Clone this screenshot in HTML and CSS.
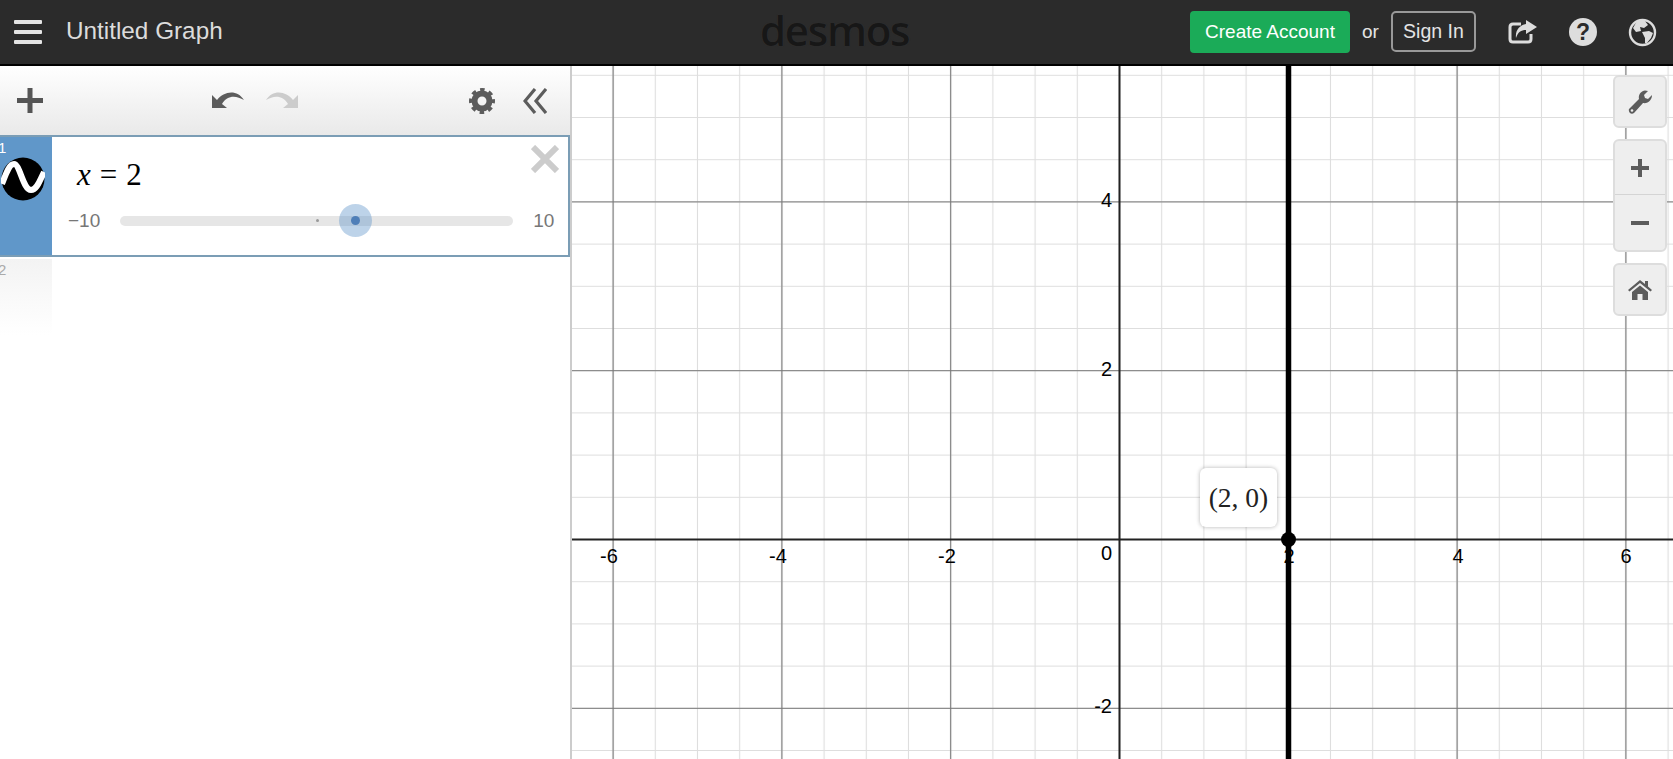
FILE: index.html
```html
<!DOCTYPE html>
<html lang="en">
<head>
    <meta charset="UTF-8">
    <title>Desmos | Graphing Calculator</title>
    <link rel="stylesheet" href="styles.css">
</head>
<body>
    <div class="header">
        <div class="header-left">
            <div class="hamburger"><span></span><span></span><span></span></div>
            <span class="graph-title">Untitled Graph</span>
        </div>
        <div class="logo">desmos</div>
        <div class="header-right">
            <a class="btn-create">Create Account</a>
            <span class="or">or</span>
            <a class="btn-signin">Sign In</a>
            <svg class="share-icon" width="29" height="24" viewBox="0 0 29 24">
                <path d="M13 4H5Q2 4 2 7V19Q2 22 5 22H20Q23 22 23 19V14" fill="none" stroke="#ddd" stroke-width="3"/>
                <path d="M18 0L29 7L18 14V10C13 10 10 12 8 18C7 10 12 5 18 4Z" fill="#ddd"/>
            </svg>
            <span class="help-icon">?</span>
            <svg class="globe-icon" width="29" height="29" viewBox="0 0 29 29">
                <circle cx="14.5" cy="14.5" r="12.5" fill="none" stroke="#ddd" stroke-width="2.400"/>
                <path d="M9 3L17 3L20 7L16 10L12 9L13 13L8 14L5 10Z" fill="#ddd"/>
                <path d="M14 14L21 13L25 15L23 20L19 25L17 25L17 20Z" fill="#ddd"/>
            </svg>
        </div>
    </div>

    <div class="main">
        <div class="sidebar">
            <div class="toolbar">
                <svg width="26" height="25" viewBox="0 0 26 25"><path d="M10.5 0h5v10h10.5v5H15.500v10h-5V15H0v-5h10.500z" fill="#555"/></svg>
                <div class="undo-redo">
                    <svg width="32" height="18" viewBox="0 0 32 18"><path d="M0 5L5 10C12 1 25-1 32 10C24 5 15 5 10 14L15 18H0Z" fill="#5c5c5c"/></svg>
                    <svg class="redo" width="32" height="18" viewBox="0 0 32 18"><path d="M0 5L5 10C12 1 25-1 32 10C24 5 15 5 10 14L15 18H0Z" fill="#ccc"/></svg>
                </div>
                <div class="toolbar-right">
                    <svg width="26" height="26" viewBox="0 0 26 26">
                        <circle cx="13" cy="13" r="7.500" fill="none" stroke="#5c5c5c" stroke-width="6"/>
                        <circle cx="13" cy="13" r="11" fill="none" stroke="#5c5c5c" stroke-width="4" stroke-dasharray="4.400 4.240" stroke-dashoffset="2.200"/>
                    </svg>
                    <svg width="24" height="26" viewBox="0 0 24 26"><path d="M12 1L2 13L12 25M23 1L13 13L23 25" fill="none" stroke="#5c5c5c" stroke-width="3.200"/></svg>
                </div>
            </div>

            <div class="expression active">
                <div class="expr-tab">
                    <span class="expr-num">1</span>
                    <svg class="expr-icon" width="44" height="44" viewBox="0 0 44 44">
                        <circle cx="22" cy="22" r="21.500" fill="#000"/>
                        <path d="M1 27C5 17 8 7 13 7C19 7 22 33 30 33C36 33 39 23 43 15" fill="none" stroke="#fff" stroke-width="6"/>
                    </svg>
                </div>
                <div class="expr-body">
                    <div class="math"><i>x</i><span class="eq">=</span>2</div>
                    <div class="slider-row">
                        <span class="slider-min">−10</span>
                        <div class="slider-track">
                            <span class="slider-zero"></span>
                            <span class="slider-handle"></span>
                        </div>
                        <span class="slider-max">10</span>
                    </div>
                </div>
                <svg class="expr-close" width="28" height="28" viewBox="0 0 28 28"><path d="M2 2L26 26M26 2L2 26" stroke="#ccc" stroke-width="6"/></svg>
            </div>

            <div class="expression empty">
                <div class="expr-tab"><span class="expr-num">2</span></div>
            </div>
        </div>

        <div class="graph">
            <svg class="graph-paper" width="1101" height="693">
                <defs>
                    <pattern id="minorGrid" patternUnits="userSpaceOnUse" x="526.400" y="452.400" width="42.200" height="42.200">
                        <path d="M21.100 0V42.200M0 21.100H42.200" stroke="#dedede" stroke-width="1.100"/>
                    </pattern>
                    <pattern id="majorGrid" patternUnits="userSpaceOnUse" x="463.100" y="389.100" width="168.800" height="168.800">
                        <path d="M84.400 0V168.800M0 84.400H168.800" stroke="#777" stroke-width="1.100"/>
                    </pattern>
                </defs>
                <rect width="1101" height="693" fill="url(#minorGrid)"/>
                <rect width="1101" height="693" fill="url(#majorGrid)"/>
                <path class="axis" d="M547.500 0V693M0 473.500H1101"/>
                <path class="curve" d="M716.500 0V693"/>
                <circle cx="716.500" cy="473.500" r="7.500" fill="#000"/>
                <g class="ticks-x">
                    <text x="37" y="497">-6</text>
                    <text x="206" y="497">-4</text>
                    <text x="375" y="497">-2</text>
                    <text x="717" y="497">2</text>
                    <text x="886" y="497">4</text>
                    <text x="1054" y="497">6</text>
                </g>
                <g class="ticks-y">
                    <text x="540" y="141">4</text>
                    <text x="540" y="310">2</text>
                    <text x="540" y="494">0</text>
                    <text x="540" y="647">-2</text>
                </g>
            </svg>

            <div class="point-label">(2, 0)</div>

            <div class="graph-controls">
                <div class="ctrl-box">
                    <div class="ctrl-btn">
                        <svg width="24" height="24" viewBox="0 0 24 24">
                            <path d="M1 19L11 9C10 5 13 1 17 0.500L20 1L16 5L17 8L20 9L24 5C24 10 20 14 15 13L6 23C3 25 0 22 1 19Z" fill="#5c5c5c"/>
                            <circle cx="4" cy="20.500" r="1.300" fill="#eee"/>
                        </svg>
                    </div>
                </div>
                <div class="ctrl-box">
                    <div class="ctrl-btn">
                        <svg width="18" height="18" viewBox="0 0 18 18"><path d="M7 0h4v7h7v4h-7v7H7v-7H0V7h7z" fill="#5c5c5c"/></svg>
                    </div>
                    <div class="ctrl-btn divided">
                        <svg width="18" height="4" viewBox="0 0 18 4"><path d="M0 0h18v4H0z" fill="#5c5c5c"/></svg>
                    </div>
                </div>
                <div class="ctrl-box">
                    <div class="ctrl-btn">
                        <svg width="24" height="20" viewBox="0 0 24 20">
                            <path d="M0 10L12 0L17 4V1H20V6.500L24 10L22.500 11.500L12 3L1.500 11.500Z" fill="#5c5c5c"/>
                            <path d="M4 12L12 5.500L20 12V20H14.500V14H9.500V20H4Z" fill="#5c5c5c"/>
                        </svg>
                    </div>
                </div>
            </div>
        </div>
    </div>
</body>
</html>
```

FILE: styles.css
```css
html, body {
    height: 100%;
}
body {
    margin: 0;
    padding: 0;
    overflow: hidden;
    background-color: #fff;
    font-family: "Liberation Sans", Arial, sans-serif;
}
.header {
    display: flex;
    justify-content: space-between;
    align-items: center;
    height: 64px;
    background-color: #2b2b2b;
    border-bottom: 2px solid #000;
    color: #e4e4e4;
}
.header-left {
    display: flex;
    align-items: center;
    width: 760px;
    padding-left: 14px;
    box-sizing: border-box;
}
.hamburger {
    display: flex;
    flex-direction: column;
    gap: 6px;
    width: 28px;
    margin-right: 24px;
}
.hamburger span {
    display: block;
    height: 4px;
    background-color: #e4e4e4;
    border-radius: 1px;
}
.graph-title {
    margin-top: -2px;
    font-size: 24.3px;
    color: #dcdcdc;
}
.logo {
    width: 150px;
    margin-top: -6px;
    font-family: "Open Sans", sans-serif;
    font-size: 42px;
    font-weight: 600;
    letter-spacing: -1.300px;
    color: #171717;
    text-shadow: 0 0 1px #3a3a3a;
}
.header-right {
    display: flex;
    align-items: center;
    flex: 1;
    padding-left: 280px;
}
.btn-create {
    display: flex;
    justify-content: center;
    align-items: center;
    width: 160px;
    height: 42px;
    background-color: #1bab58;
    border-radius: 4px;
    color: #fff;
    font-size: 19px;
}
.or {
    margin: 0 12px;
    font-size: 19px;
}
.btn-signin {
    display: flex;
    justify-content: center;
    align-items: center;
    width: 85px;
    height: 41px;
    box-sizing: border-box;
    margin-top: -2px;
    padding-top: 1px;
    border: 2px solid #999;
    border-radius: 5px;
    font-size: 19.5px;
}
.share-icon {
    margin-left: 32px;
}
.help-icon {
    display: flex;
    justify-content: center;
    align-items: center;
    width: 28px;
    height: 28px;
    margin-left: 32px;
    background-color: #ddd;
    border-radius: 50%;
    color: #2b2b2b;
    font-size: 23px;
    font-weight: bold;
}
.globe-icon {
    margin-left: 31px;
}
.main {
    display: flex;
    height: calc(100% - 66px);
}
.sidebar {
    width: 570px;
    flex-shrink: 0;
    border-right: 2px solid #ccc;
    background-color: #fff;
}
.toolbar {
    display: flex;
    align-items: center;
    height: 69px;
    padding: 0 23px 0 17px;
    box-sizing: border-box;
    background: linear-gradient(#fff, #e9e9e9);
}
.undo-redo {
    display: flex;
    gap: 22px;
    margin-top: -4px;
    margin-left: 169px;
}
.redo {
    transform: scaleX(-1);
}
.toolbar-right {
    display: flex;
    align-items: center;
    gap: 28px;
    margin-left: auto;
}
.expression {
    display: flex;
    position: relative;
}
.expression.active {
    height: 122px;
    box-sizing: border-box;
    border: 2px solid #7b9db5;
    border-left: none;
}
.expr-tab {
    position: relative;
    width: 52px;
    flex-shrink: 0;
}
.active .expr-tab {
    background-color: #6097c9;
}
.expr-num {
    position: absolute;
    top: 2px;
    left: -2px;
    font-size: 15px;
    color: #fff;
}
.expr-icon {
    position: absolute;
    top: 20px;
    left: 1px;
}
.expr-body {
    flex: 1;
    padding: 20px 14px 0 25px;
}
.math {
    height: 40px;
    font-family: "Liberation Serif", "Times New Roman", serif;
    font-size: 31px;
    line-height: 36px;
    color: #000;
}
.math .eq {
    margin: 0 9px;
}
.slider-row {
    display: flex;
    align-items: center;
    margin-top: 13px;
    margin-left: -9px;
    font-size: 19px;
    color: #777;
}
.slider-track {
    position: relative;
    width: 393px;
    height: 10px;
    margin: 0 20px 0 20px;
    background-color: #e6e6e6;
    border-radius: 5px;
}
.slider-zero {
    position: absolute;
    top: 3px;
    left: 196px;
    width: 3px;
    height: 3px;
    background-color: #999;
    border-radius: 50%;
}
.slider-handle {
    position: absolute;
    top: -12px;
    left: 219px;
    width: 33px;
    height: 33px;
    background-color: rgba(90, 145, 200, 0.4);
    border-radius: 50%;
}
.slider-handle::after {
    content: "";
    position: absolute;
    top: 12px;
    left: 12px;
    width: 9px;
    height: 9px;
    background-color: #4f7fb8;
    border-radius: 50%;
}
.expr-close {
    position: absolute;
    top: 8px;
    right: 9px;
}
.expression.empty {
    height: 76px;
    margin-top: 2px;
}
.empty .expr-tab {
    background: linear-gradient(#f3f3f3, #fff);
}
.empty .expr-num {
    top: 2px;
    color: #aaa;
}
.graph {
    position: relative;
    flex: 1;
    overflow: hidden;
}
.graph-paper {
    display: block;
}
.axis {
    fill: none;
    stroke: #222;
    stroke-width: 2px;
}
.curve {
    fill: none;
    stroke: #000;
    stroke-width: 5.5px;
}
.ticks-x text, .ticks-y text {
    font-family: "Liberation Sans", Arial, sans-serif;
    font-size: 20px;
    fill: #000;
}
.ticks-x text {
    text-anchor: middle;
}
.ticks-y text {
    text-anchor: end;
}
.point-label {
    position: absolute;
    top: 402px;
    left: 628px;
    display: flex;
    justify-content: center;
    align-items: center;
    width: 77px;
    height: 59px;
    background-color: #fff;
    border-radius: 6px;
    box-shadow: 0 0 4px rgba(0, 0, 0, 0.3);
    font-family: "Liberation Serif", "Times New Roman", serif;
    font-size: 27.5px;
    color: #222;
}
.graph-controls {
    position: absolute;
    top: 9px;
    right: 6px;
    display: flex;
    flex-direction: column;
    gap: 11px;
}
.ctrl-box {
    width: 54px;
    box-sizing: border-box;
    background-color: #eee;
    border: 2px solid #ddd;
    border-radius: 6px;
}
.ctrl-btn {
    display: flex;
    justify-content: center;
    align-items: center;
    height: 49px;
}
.ctrl-btn.divided {
    height: 56px;
    box-sizing: border-box;
    border-top: 1px solid #d4d4d4;
}
.ctrl-box:nth-child(2) .ctrl-btn:first-child {
    height: 53px;
}
```
